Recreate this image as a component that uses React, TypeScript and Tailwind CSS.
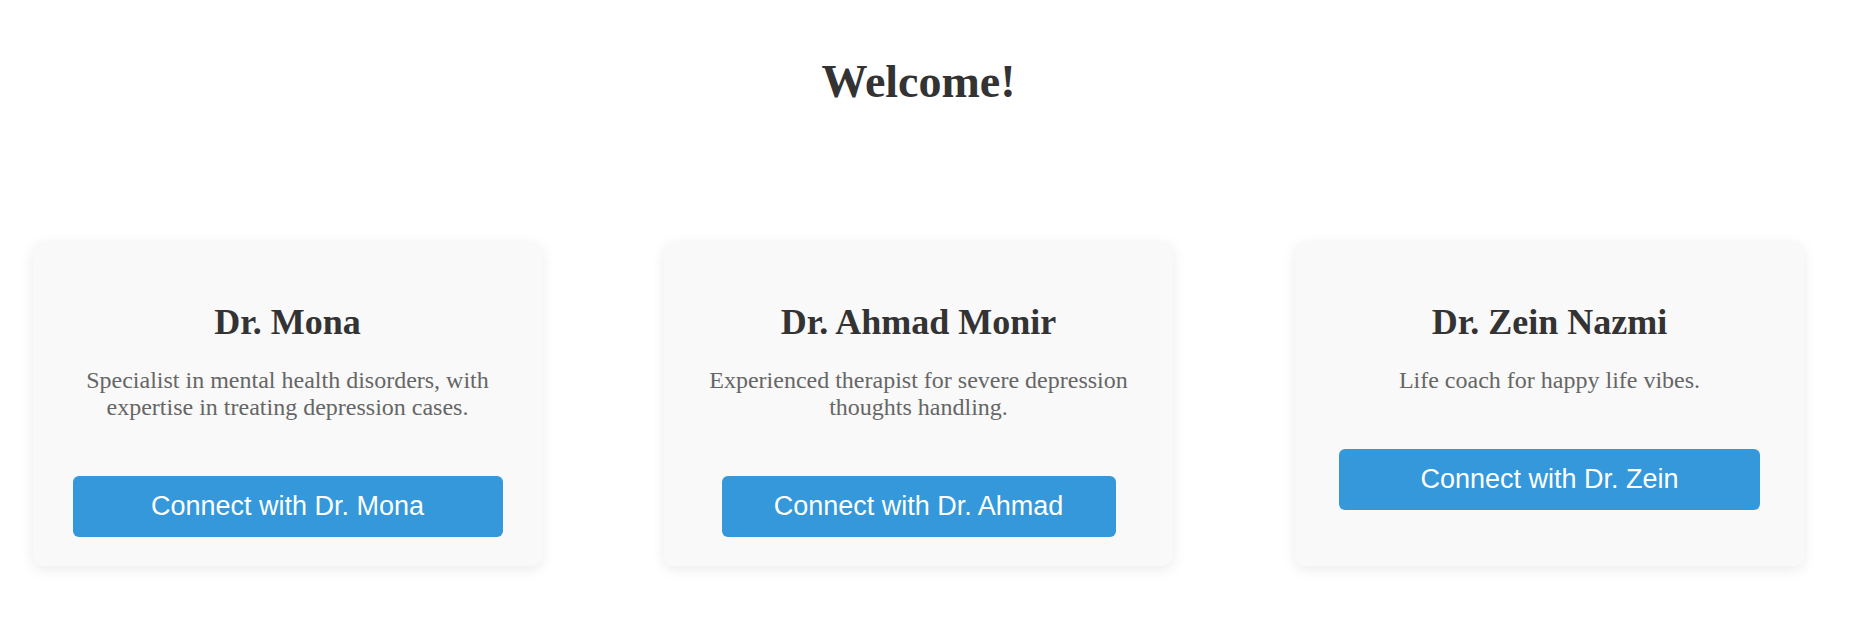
const doctors = [
  {
    name: 'Dr. Mona',
    bio: 'Specialist in mental health disorders, with expertise in treating depression cases.',
    cta: 'Connect with Dr. Mona',
    btn: 'w-[430px]',
  },
  {
    name: 'Dr. Ahmad Monir',
    bio: 'Experienced therapist for severe depression thoughts handling.',
    cta: 'Connect with Dr. Ahmad',
    btn: 'w-[394px]',
  },
  {
    name: 'Dr. Zein Nazmi',
    bio: 'Life coach for happy life vibes.',
    cta: 'Connect with Dr. Zein',
    btn: 'w-[421px]',
  },
];

export default function App() {
  return (
    <div className="min-h-screen bg-white font-['Liberation_Serif',serif] text-[#333]">
      <h1 className="pt-[56px] pr-[12px] text-center text-[46px] font-bold leading-[52px]">Welcome!</h1>

      <div className="mt-[133px] flex gap-[122px] pl-[33px]">
        {doctors.map((doc) => (
          <div
            key={doc.name}
            className="flex w-[509px] flex-col items-center rounded-[10px] bg-[#f9f9f9] px-[38px] pt-[60px] pb-[29px] shadow-[0_4px_14px_rgba(0,0,0,0.08)]"
          >
            <h2 className="text-center text-[36px] font-bold leading-[42px]">{doc.name}</h2>
            <p className="mt-[24px] text-center text-[24px] leading-[27px] text-[#666]">{doc.bio}</p>
            <button
              className={`mt-[55px] h-[61px] ${doc.btn} rounded-[6px] bg-[#3498db] font-['Liberation_Sans',Arial,sans-serif] text-[27px] text-white`}
            >
              {doc.cta}
            </button>
          </div>
        ))}
      </div>
    </div>
  );
}
